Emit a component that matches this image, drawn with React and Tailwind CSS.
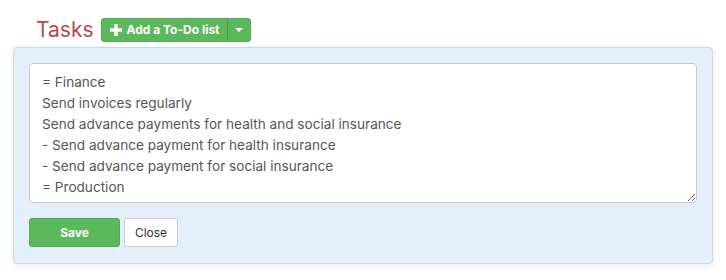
const tasks = `= Finance
Send invoices regularly
Send advance payments for health and social insurance
- Send advance payment for health insurance
- Send advance payment for social insurance
= Production`;

function PlusIcon() {
  return (
    <svg width="12" height="12" viewBox="0 0 12 12" className="shrink-0">
      <path d="M4.3 0h3.4v4.3H12v3.4H7.7V12H4.3V7.7H0V4.3h4.3z" fill="white" />
    </svg>
  );
}

export default function App() {
  return (
    <div
      className="w-[726px] h-[280px] bg-white"
      style={{ fontFamily: "Inter, 'Noto Sans', sans-serif" }}
    >
      <div className="flex items-center pl-[36px] pt-[18px] h-[42px]">
        <h1 className="text-[21px] leading-[24px] text-[#b94a48] mr-[7px]">Tasks</h1>
        <div className="flex h-[24px] rounded-[3px] border border-[#4cae4c] bg-[#5cb85c] text-white">
          <button className="flex items-center gap-[5px] pl-[8px] pr-[7px] text-[12px] font-bold">
            <PlusIcon />
            Add a To-Do list
          </button>
          <button className="flex items-center justify-center w-[23px] border-l border-[#449d44]">
            <span className="block w-0 h-0 border-l-[4px] border-r-[4px] border-t-[4px] border-l-transparent border-r-transparent border-t-white" />
          </button>
        </div>
      </div>
      <div className="mx-[13px] mt-[5px] w-[700px] h-[217px] rounded-[4px] border border-[#c4daf0] bg-[#e3effb] p-[15px] shadow-[0_2px_6px_rgba(0,0,0,0.08)]">
        <textarea
          className="block w-[668px] h-[140px] rounded-[4px] border border-[#c8c8c8] bg-white px-[12px] pt-[8px] pb-[4px] text-[13.6px] leading-[21px] text-[#555] outline-none"
          style={{ fontFamily: "Inter, 'Noto Sans', sans-serif" }}
          defaultValue={tasks}
        />
        <div className="flex gap-[4px] mt-[15px]">
          <button className="w-[91px] h-[29px] rounded-[3px] border border-[#4cae4c] bg-[#5cb85c] text-white text-[12px] font-bold">
            Save
          </button>
          <button className="w-[54px] h-[29px] rounded-[3px] border border-[#ccc] bg-white text-[#333] text-[12px]">
            Close
          </button>
        </div>
      </div>
    </div>
  );
}
